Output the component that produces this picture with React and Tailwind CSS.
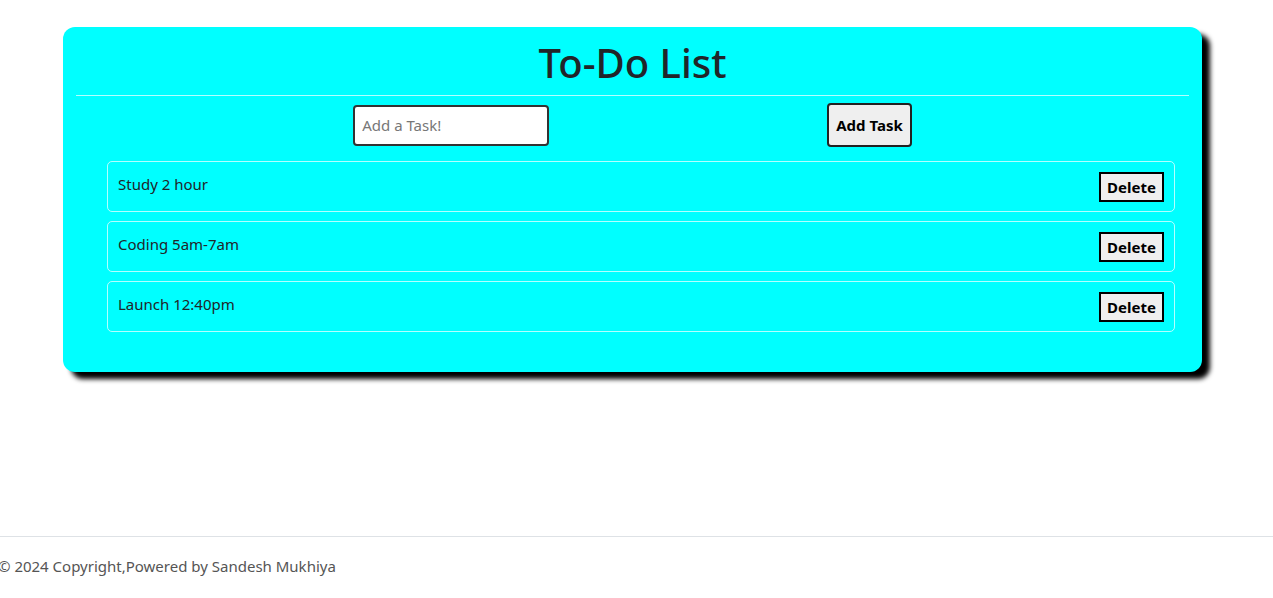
import React, { useState } from "react";

const App = () => {
  const [tasks] = useState(["Study 2 hour", "Coding 5am-7am", "Launch 12:40pm"]);

  return (
    <div className="min-h-screen bg-white font-['Noto_Sans',sans-serif] text-[#212529]">
      <div className="pt-[27px] pl-[63px] pr-[71px]">
        <div className="bg-[#00ffff] rounded-[12px] shadow-[8px_7px_5px_#000] px-[13px] pb-[40px]">
          <h1 className="text-center text-[40px] font-medium leading-none pt-[16px] pb-[12px]">To-Do List</h1>
          <hr className="border-0 border-t border-white/70" />
          <div className="flex justify-center items-center gap-[278px] mt-[7px]">
            <input
              type="text"
              placeholder="Add a Task!"
              className="w-[196px] h-[41px] bg-white border-2 border-[#333] rounded-[4px] px-[7px] text-[15px] placeholder:text-[#777] outline-none"
            />
            <button className="h-[44px] px-[7px] bg-[#efefef] border-2 border-[#222] rounded-[4px] font-bold text-[15px] text-black">
              Add Task
            </button>
          </div>
          <ul className="mt-[14px] ml-[31px] mr-[14px] flex flex-col gap-[9px]">
            {tasks.map((t) => (
              <li
                key={t}
                className="h-[51px] border border-white/70 rounded-[5px] pl-[10px] pr-[10px] flex justify-between"
              >
                <span className="text-[15px] pt-[11px]">{t}</span>
                <button className="self-start mt-[10px] h-[30px] w-[65px] bg-[#efefef] border-2 border-black font-bold text-[15px] text-black">
                  Delete
                </button>
              </li>
            ))}
          </ul>
        </div>
      </div>
      <footer className="mt-[164px]">
        <hr className="border-0 border-t border-[#dee2e6]" />
        <p className="text-[15px] text-[#555] pt-[18px] -ml-[2px]">© 2024 Copyright,Powered by Sandesh Mukhiya</p>
      </footer>
    </div>
  );
};

export default App;
